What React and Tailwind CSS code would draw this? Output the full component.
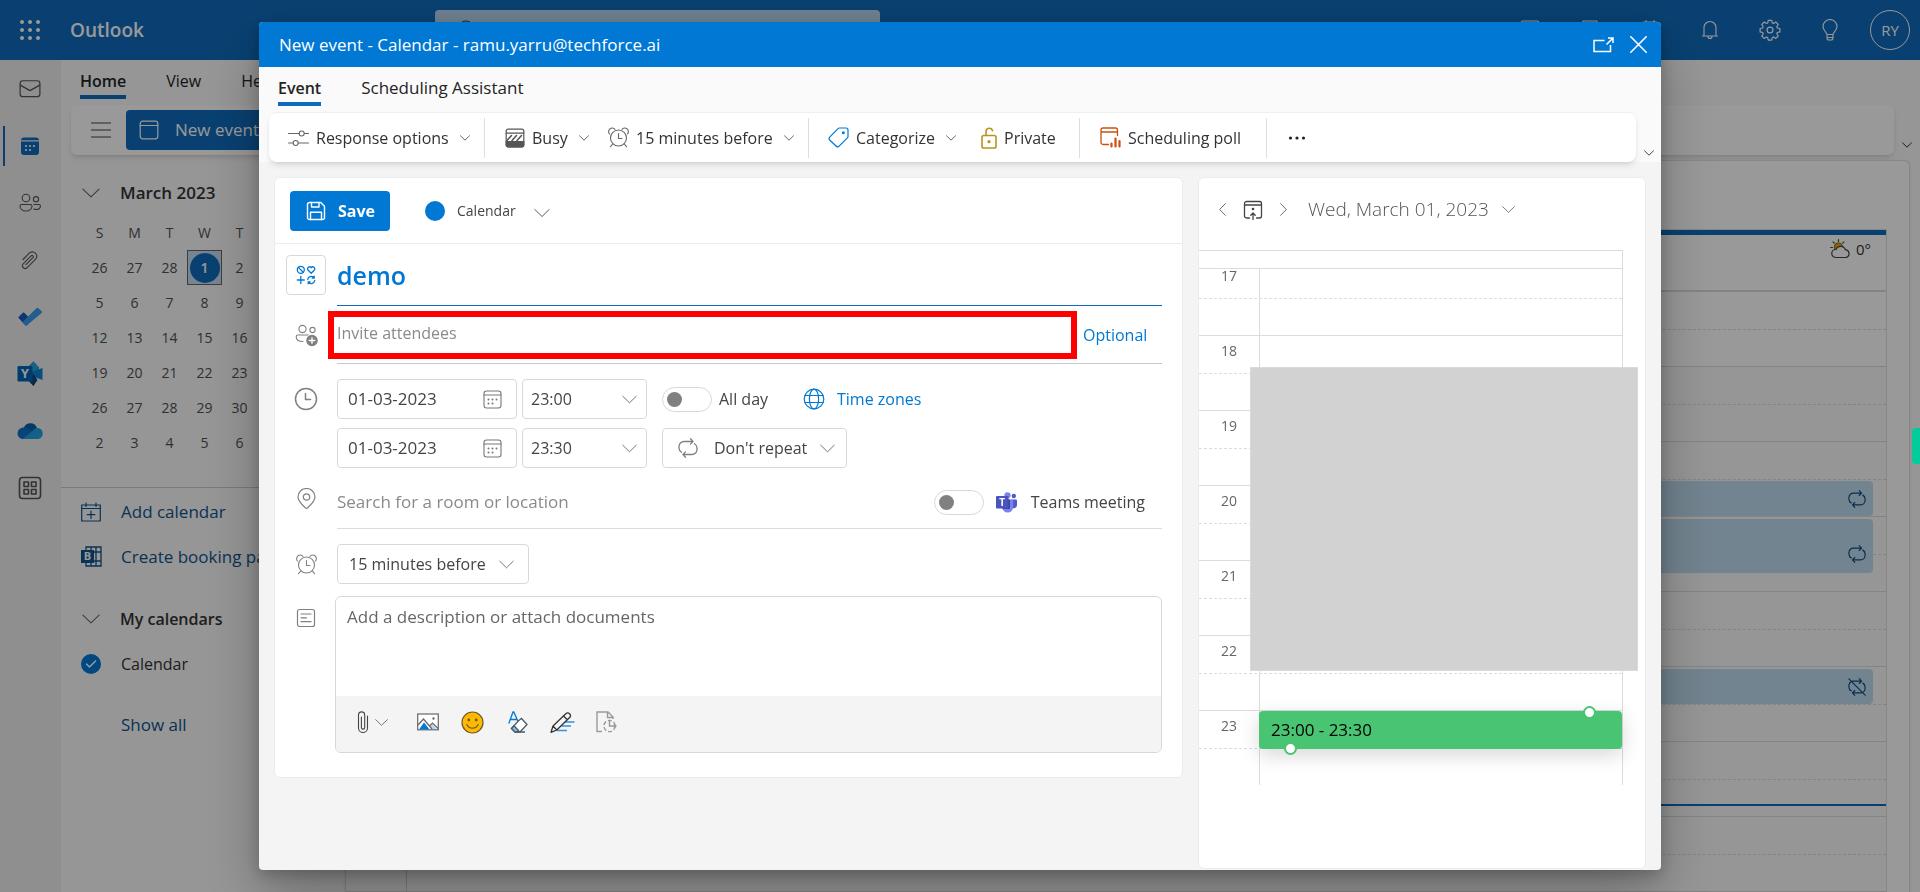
import { useState } from 'react';
import clsx from 'clsx';

/* ---------- icons ---------- */

const Svg = ({ size = 20, w = 1, box = 20, className, children }) => (
    <svg
        width={size}
        height={size}
        viewBox={`0 0 ${box} ${box}`}
        fill="none"
        stroke="currentColor"
        strokeWidth={w}
        strokeLinecap="round"
        strokeLinejoin="round"
        className={clsx('shrink-0', className)}
        aria-hidden="true"
    >
        {children}
    </svg>
);

const Chevron = ({ size = 10, className }) => (
    <Svg size={size} box={10} w={size > 12 ? 0.6 : 1} className={className}>
        <path d="M.5 2.8 5 7.2l4.5-4.4" />
    </Svg>
);

const Waffle = () => (
    <svg width="20" height="20" viewBox="0 0 20 20" fill="currentColor" aria-hidden="true">
        {[2, 10, 18].map((y) => [2, 10, 18].map((x) => <circle key={`${x}-${y}`} cx={x} cy={y} r="2" />))}
    </svg>
);

const MailIcon = () => (
    <Svg size={22} w={1.1}>
        <rect x="1" y="2.5" width="18" height="14.5" rx="2.5" />
        <path d="m1.2 6.5 8.8 5 8.8-5" />
    </Svg>
);

const CalendarSolid = () => (
    <svg width="20" height="20" viewBox="0 0 20 20" aria-hidden="true">
        <path d="M1 4.2A3 3 0 0 1 4 1.5h12a3 3 0 0 1 3 2.7z" fill="#0f6cbd" />
        <path d="M1 5.6h18V16a3 3 0 0 1-3 3H4a3 3 0 0 1-3-3z" fill="#0f6cbd" />
        <g fill="#fff">
            <circle cx="6" cy="10" r="1.1" />
            <circle cx="10" cy="10" r="1.1" />
            <circle cx="14" cy="10" r="1.1" />
            <circle cx="6" cy="14" r="1.1" />
            <circle cx="10" cy="14" r="1.1" />
        </g>
    </svg>
);

const PeopleIcon = () => (
    <Svg size={22} w={1.1} box={22}>
        <circle cx="7" cy="6" r="3.8" />
        <circle cx="17" cy="7.2" r="2.6" />
        <path d="M2.5 12.5h9a1.5 1.5 0 0 1 1.5 1.5c0 3-2.5 5-6 5s-6-2-6-5a1.5 1.5 0 0 1 1.5-1.5z" />
        <path d="M15 12.5h5a1.4 1.4 0 0 1 1.4 1.4c0 2.1-1.7 3.6-4.3 3.6-.9 0-1.7-.2-2.3-.5" />
    </Svg>
);

const PaperclipIcon = () => (
    <Svg size={20} w={1.1}>
        <path d="m3 9.5 6.2-6.3a4.4 4.4 0 0 1 7.2 1.3 4.4 4.4 0 0 1-1 4.9l-8.2 8.2a2.7 2.7 0 0 1-4-3.7l7.900-8a1.2 1.2 0 0 1 1.900 1.700L6 14.600" />
    </Svg>
);

const TodoIcon = () => (
    <svg width="25" height="20" viewBox="0 0 25 20" aria-hidden="true">
        <path d="m.8 9.8 4-4a1 1 0 0 1 1.4 0l7.3 7.3-4.7 5.2a1 1 0 0 1-1.4 0L.8 11.3a1 1 0 0 1 0-1.5z" fill="#185abd" />
        <path d="m7.300 18.200-3-3L18.700 1.100a1 1 0 0 1 1.400 0l3.800 3.300a1 1 0 0 1 0 1.400L9 18.300a1.200 1.200 0 0 1-1.700-.1z" fill="#3a9be8" />
    </svg>
);

const YammerIcon = () => (
    <svg width="26" height="26" viewBox="0 0 26 26" aria-hidden="true">
        <path d="M11 6 16.500.5 22 6.500 16.500 25 11 19z" fill="#0f6aa8" />
        <path d="m11 6 5.500-5.500L22 7l-5.500 5z" fill="#2aa4e0" />
        <path d="M16 10.500 25.500 7v12L16 15.500z" fill="#0a84d6" />
        <path d="m11 19 5.500-6 4 6-4 6z" fill="#11487f" />
        <rect x=".5" y="5" width="15" height="15.500" rx="1.200" fill="#0067b8" />
        <text x="8" y="17.300" textAnchor="middle" fontSize="12.500" fontWeight="700" fill="#fff">Y</text>
    </svg>
);

const OneDriveIcon = () => (
    <svg width="26" height="18" viewBox="0 0 26 18" aria-hidden="true">
        <path d="M7 5.500A7 7 0 0 1 20 6l-5 6-9-4z" fill="#0a5fb0" />
        <path d="M5.500 17A5.500 5.500 0 0 1 .5 11.500C.5 8 3.500 5.300 7 5.500c1.600.1 2.800.5 4 1.300L17 10l-9 7z" fill="#0c74c8" />
        <path d="M15.500 9.300c1.300-2 3-3.200 5-3.200 3 0 5.200 2.400 5.200 5.400 0 3.200-2.300 5.500-5.200 5.500h-15z" fill="#24a0e4" />
    </svg>
);

const AppsIcon = () => (
    <Svg size={24} box={24} w={1.6}>
        <rect x="1.5" y="1.5" width="21" height="21" rx="3" />
        <rect x="6" y="6" width="4.5" height="4.5" />
        <rect x="13.5" y="6" width="4.5" height="4.5" />
        <rect x="6" y="13.5" width="4.5" height="4.5" />
        <rect x="13.5" y="13.5" width="4.5" height="4.5" />
    </Svg>
);

const BlankCalendar = () => (
    <Svg w={1.2}>
        <rect x="1.2" y="1.2" width="17.6" height="17.6" rx="2.5" />
        <path d="M1.2 5.5h17.6" />
    </Svg>
);

const AddCalendarIcon = () => (
    <Svg w={1.2}>
        <rect x=".7" y="3" width="18.6" height="16" />
        <path d="M.7 6.5h18.6M5 1v3.5M15 1v3.5M10 9v7.5M6.2 12.7h7.6" />
    </Svg>
);

const BookingsIcon = () => (
    <svg width="21" height="21" viewBox="0 0 21 21" aria-hidden="true" className="shrink-0">
        <path d="M5 1h15v19H5zM10 1v19M15 1v19M5 6h15M5 15h15" fill="none" stroke="#0f548c" strokeWidth="1.3" />
        <rect x="0" y="4" width="13" height="13" fill="#0f548c" />
        <text x="6.500" y="14.300" textAnchor="middle" fontSize="11" fontWeight="700" fill="#fff">B</text>
    </svg>
);

const VideoIcon = () => (
    <Svg w={1.2}>
        <rect x="1" y="1" width="18" height="17" rx="2" />
        <path d="M5 7h10M5 12h6" />
    </Svg>
);

const NotebookIcon = () => (
    <Svg w={1.2}>
        <path d="M3 1h14v12l-5 6H3zM12 19v-6h5" />
    </Svg>
);

const DayIcon = () => (
    <Svg w={1.2}>
        <rect x="2" y="2" width="16" height="16" rx="2" />
        <path d="M6 .6V4M14 .6V4M2 7h16" />
    </Svg>
);

const BellIcon = () => (
    <Svg size={20} w={1.1}>
        <path d="M4 16V7.5a6 6 0 0 1 12 0V16M2.5 16h15M8 16.5a2 2 0 0 0 4 0" />
    </Svg>
);

const GearIcon = () => (
    <Svg size={22} box={24} w={1.3}>
        <circle cx="12" cy="12" r="3.2" />
        <path d="m10.100 1.500 3.800 0 .6 2.800 1.400.6 2.400-1.600 2.700 2.600-1.600 2.500.6 1.400 2.800.6v3.700l-2.800.6-.6 1.400 1.600 2.400-2.700 2.700-2.400-1.600-1.400.6-.6 2.800h-3.800l-.6-2.800-1.400-.6-2.400 1.600L3 18.500l1.600-2.400-.6-1.400-2.800-.6v-3.700l2.800-.6.600-1.400L3 5.900l2.700-2.600 2.400 1.600 1.400-.6z" />
    </Svg>
);

const BulbIcon = () => (
    <Svg size={22} box={22} w={1.1}>
        <path d="M8 15.5c0-2-4-4-4-8a7 7 0 0 1 14 0c0 4-4 6-4 8zM8 15.5v3.5a2 2 0 0 0 2 2h2a2 2 0 0 0 2-2v-3.5M8 18.5h6" />
    </Svg>
);

const WeatherIcon = () => (
    <svg width="22" height="20" viewBox="0 0 22 20" fill="none" stroke="#444" strokeWidth="1.2" strokeLinecap="round" aria-hidden="true">
        <circle cx="8.5" cy="8" r="4" fill="#f7a800" stroke="#8a6a10" />
        <path d="M8.5.7v1.8M3 2.8l1.3 1.3M14 2.8l-1.3 1.3M.7 8.5h1.8" />
        <path d="M5.5 18.5a4 4 0 1 1 .5-8 5 5 0 0 1 9.4.2 4 4 0 0 1 .8 7.8z" fill="#fff" />
    </svg>
);

const RepeatIcon = ({ size = 20, off, className }) => (
    <Svg size={size} w={1.3} className={className}>
        <path d="M12.500.8 15 3.500l-2.500 2.600M15 3.500H6a5 5 0 0 0-5 5v1.500a5 5 0 0 0 2.500 4.300M7.500 19.200 5 16.500l2.500-2.600M5 16.500h9a5 5 0 0 0 5-5V10a5 5 0 0 0-2.500-4.300" />
        {off && <path d="m1 1 18 18" />}
    </Svg>
);

const SlidersIcon = () => (
    <Svg size={21} box={21} w={1.1}>
        <path d="M.5 6.5h10.5M16.5 6.5h4M.5 16h4.5M10.5 16h10" />
        <circle cx="13.7" cy="6.5" r="2.5" />
        <circle cx="7.7" cy="16" r="2.5" />
    </Svg>
);

const BusyIcon = () => (
    <Svg size={20} w={1.2}>
        <path d="M1.2 13.500h17.600V17a1.800 1.800 0 0 1-1.800 1.800H3A1.800 1.800 0 0 1 1.200 17z" fill="currentColor" />
        <rect x="1.2" y="1.2" width="17.6" height="17.6" rx="2" />
        <path d="M1.2 5.200h17.600" />
        <path d="m2 12.500 4.500-5M7 12.500l4.500-5M12 12.500l4.500-5" strokeWidth="1.6" />
    </Svg>
);

const AlarmIcon = ({ size = 21 }) => (
    <Svg size={size} box={21} w={1.1}>
        <circle cx="10.5" cy="11" r="8" />
        <path d="M10.5 6.5v5h3.5M4.7 17 2.5 19.7M16.3 17l2.2 2.7" />
        <path d="M1.5 7A3.3 3.3 0 1 1 7 2.3M19.5 7A3.3 3.3 0 1 0 14 2.3" />
    </Svg>
);

const TagIcon = () => (
    <Svg size={21} box={21} w={1.2} className="text-[#0078d4]">
        <path d="M11.5 1h6.5a2 2 0 0 1 2 2v6.5a2 2 0 0 1-.6 1.4l-8.3 8.3a2 2 0 0 1-2.8 0L1.7 13a2 2 0 0 1 0-2.8L10 1.7A2 2 0 0 1 11.5 1z" />
        <circle cx="15.3" cy="5.800" r=".9" fill="currentColor" />
    </Svg>
);

const LockOpenIcon = () => (
    <svg width="16" height="22" viewBox="0 0 16 22" fill="none" stroke="#b8941d" strokeWidth="1.6" strokeLinecap="round" aria-hidden="true">
        <rect x="1" y="8.5" width="14" height="12.5" rx="1.8" />
        <path d="M5 8.500V4.500a3.300 3.300 0 0 1 6.500-.8" />
        <circle cx="8" cy="14.7" r=".8" fill="#b8941d" />
    </svg>
);

const PollIcon = () => (
    <svg width="21" height="21" viewBox="0 0 21 21" fill="none" stroke="#ca5010" strokeWidth="1.3" strokeLinecap="round" aria-hidden="true">
        <path d="M8.5 17.5H3a2 2 0 0 1-2-2V3a2 2 0 0 1 2-2h12.5a2 2 0 0 1 2 2v5.5M1 5h16.5" />
        <path d="M11.5 19.5v-3M15.5 19.500v-8M19.500 19.500v-5.500" strokeWidth="2.2" />
    </svg>
);

const PopoutIcon = () => (
    <svg width="21" height="16" viewBox="0 0 21 16" fill="none" stroke="#fff" strokeWidth="1.5" aria-hidden="true">
        <path d="M11.5 3.500H1v11h16.500V8M13.500 7.500l6-6M15 1h5v5" />
    </svg>
);

const SaveIcon = () => (
    <Svg size={20} w={1.4}>
        <path d="M3.5 1.5h11.3l3.7 3.7v11.300a2 2 0 0 1-2 2h-13a2 2 0 0 1-2-2v-13a2 2 0 0 1 2-2z" />
        <path d="M5.5 1.500v4.500h7.500V1.500M4.500 18.500v-7.300h11v7.300" />
    </Svg>
);

const CharmsIcon = () => (
    <Svg size={20} w={1.3} className="text-[#0078d4]">
        <circle cx="4.8" cy="4.8" r="3.5" />
        <path d="m2.400 2.400 4.800 4.800M15.200 8.300 12 5a1.900 1.900 0 0 1 3.200-2.300A1.900 1.900 0 0 1 18.400 5zM4.800 11.500v7M1.300 15h7" />
        <path d="M11.700 14.500a3.500 3.500 0 0 1 6-2M18.200 11.200v2h-2M18.700 15.500a3.500 3.500 0 0 1-6 2M12.200 18.800v-2h2" />
    </Svg>
);

const AttendeesIcon = () => (
    <Svg size={23} box={23} w={1.1}>
        <circle cx="7.5" cy="5" r="3.6" />
        <circle cx="17.5" cy="6" r="2.6" />
        <path d="M13 11H3a1.8 1.8 0 0 0-1.8 1.8C1.2 15.5 3.5 17.5 8 17.5" />
        <circle cx="17" cy="16.5" r="5.2" fill="currentColor" />
        <path d="M17 13.7v5.6M14.2 16.5h5.6" stroke="#fff" strokeWidth="1.3" />
    </Svg>
);

const ClockIcon = () => (
    <Svg size={24} box={24} w={1.5}>
        <circle cx="12" cy="12" r="10.5" />
        <path d="M11.5 6.5v6h5" />
    </Svg>
);

const PinIcon = () => (
    <Svg size={21} box={21} w={1.2}>
        <path d="M10.5 20.3c-.5 0-.9-.2-1.2-.5C5.5 16.3 2 13 2 9a8.5 8.5 0 0 1 17 0c0 4-3.5 7.3-7.3 10.8-.3.3-.7.5-1.2.5z" />
        <circle cx="10.5" cy="9" r="3.2" />
    </Svg>
);

const NoteIcon = () => (
    <Svg size={20} w={1.2}>
        <rect x="1.5" y="1.5" width="17" height="17" rx="2" />
        <path d="M5 6h10M5 9.8h5.5M5 13.7h10" />
    </Svg>
);

const DateIcon = () => (
    <Svg size={19} box={19} w={1.1}>
        <rect x="1" y="1" width="17" height="17" rx="2.5" />
        <path d="M1 5h17" />
        <g fill="currentColor" stroke="none">
            <circle cx="5.5" cy="9.5" r="1" />
            <circle cx="9.5" cy="9.5" r="1" />
            <circle cx="13.5" cy="9.5" r="1" />
            <circle cx="5.5" cy="13.5" r="1" />
            <circle cx="9.5" cy="13.5" r="1" />
        </g>
    </Svg>
);

const GlobeIcon = () => (
    <Svg size={22} box={22} w={1.2}>
        <circle cx="11" cy="11" r="9.8" />
        <ellipse cx="11" cy="11" rx="4.6" ry="9.8" />
        <path d="M2 7.5h18M2 14.5h18" />
    </Svg>
);

const TeamsIcon = () => (
    <svg width="21" height="21" viewBox="0 0 21 21" aria-hidden="true" className="shrink-0">
        <circle cx="17.8" cy="4" r="2.2" fill="#5059c9" />
        <path d="M15 7.5h5a1 1 0 0 1 1 1v4.500a3.500 3.500 0 0 1-5 3z" fill="#5059c9" />
        <circle cx="11.5" cy="3.3" r="3.1" fill="#7b83eb" />
        <path d="M7 7.500h9.200a1 1 0 0 1 1 1V15a5.500 5.500 0 0 1-11 0V8.500z" fill="#7b83eb" />
        <path d="M6.500 7.500H14V16a1 1 0 0 1-1 1H6.500z" fill="#3c42a8" />
        <rect x="0" y="4" width="12.5" height="12.5" rx="1.1" fill="#4b53bc" />
        <text x="6.200" y="14" textAnchor="middle" fontSize="10" fontWeight="700" fill="#fff">T</text>
    </svg>
);

const TodayIcon = () => (
    <Svg size={20} w={1.3}>
        <path d="M6.5 18H3.5a2 2 0 0 1-2-2V3.5a2 2 0 0 1 2-2h13a2 2 0 0 1 2 2V16a2 2 0 0 1-2 2h-3M1.5 5h17" />
        <path d="M10 19.5v-6M7.800 15.300 10 13l2.200 2.300" />
        <circle cx="10" cy="9" r=".7" fill="currentColor" />
    </Svg>
);

const AttachIcon = () => (
    <svg width="12" height="22" viewBox="0 0 12 22" fill="none" stroke="#444" strokeWidth="1.1" strokeLinecap="round" aria-hidden="true">
        <path d="M10.500 5v12a4.500 4.500 0 0 1-9 0V4a3 3 0 0 1 6.200 0v12.500a1.600 1.600 0 0 1-3.300 0V6" />
    </svg>
);

const PictureIcon = () => (
    <svg width="22" height="18" viewBox="0 0 22 18" fill="none" stroke="#666" strokeWidth="1.2" aria-hidden="true">
        <rect x=".7" y="1" width="20.6" height="15.8" fill="#fff" />
        <path d="M2 16.500 7 9.500l5.500 7z" fill="#0078d4" stroke="none" />
        <path d="M13 14l2.500-3 4 5h-5z" fill="#b4d6f0" stroke="none" />
        <path d="m1 12 5.500-6 8.500 10M12.500 13l3-3 5.500 5.500" />
        <circle cx="16.5" cy="5.5" r=".6" />
    </svg>
);

const SmileIcon = () => (
    <svg width="23" height="23" viewBox="0 0 23 23" fill="none" aria-hidden="true">
        <circle cx="11.5" cy="11.5" r="10.5" fill="#ffb900" stroke="#6b5a2a" strokeWidth="1.2" />
        <circle cx="7.8" cy="9" r="1.4" fill="#6b5a2a" />
        <circle cx="15.2" cy="9" r="1.4" fill="#6b5a2a" />
        <path d="M5.800 13.500c1.200 2.500 3.300 3.700 5.700 3.700s4.500-1.200 5.700-3.700" stroke="#6b5a2a" strokeWidth="1.2" strokeLinecap="round" />
    </svg>
);

const ClearFormatIcon = () => (
    <svg width="20" height="22" viewBox="0 0 20 22" fill="none" strokeWidth="1.3" aria-hidden="true">
        <path d="M.8 12.500 5 1h.8l4 9M2.500 8.500h6" stroke="#0078d4" />
        <path d="m10.500 9.800 3-2.300 5.500 6-7 7.500H7L3.500 17.500z" fill="#fff" stroke="#4a5a68" />
        <path d="m3.500 17.500 2.500-2.700 4.500 4.700L9 21H7z" fill="#7fbdec" stroke="#4a5a68" />
        <path d="M9 21h8" stroke="#4a5a68" />
    </svg>
);

const InkIcon = () => (
    <svg width="25" height="21" viewBox="0 0 25 21" fill="none" strokeWidth="1.3" strokeLinejoin="round" aria-hidden="true">
        <path d="M15 10h9.500M11.500 14h9.500M7 18.500h10" stroke="#2f93dd" />
        <path d="M1 20.300 3 14 15.800 1.800a2.600 2.600 0 0 1 3.800 3.700L6.800 18zM3 14l3.800 4M13.500 4l3.800 3.700" fill="#f4f4f4" stroke="#333" />
    </svg>
);

const TemplateIcon = () => (
    <svg width="21" height="22" viewBox="0 0 21 22" fill="none" stroke="#999" strokeWidth="1.4" aria-hidden="true">
        <path d="M6 20.500H1V1h11l5 5v2M11.500 1v5.500H17" />
        <circle cx="13.5" cy="15" r="5.6" strokeDasharray="4 2" />
        <path d="M13.500 9v6h6M18 13.300l2 1.700-2 1.700" />
    </svg>
);

/* ---------- page behind the dialog ---------- */

const railItems = [
    { label: 'Mail', Icon: MailIcon },
    { label: 'Calendar', Icon: CalendarSolid, active: true },
    { label: 'People', Icon: PeopleIcon },
    { label: 'Files', Icon: PaperclipIcon },
    { label: 'To Do', Icon: TodoIcon },
    { label: 'Yammer', Icon: YammerIcon },
    { label: 'OneDrive', Icon: OneDriveIcon },
    { label: 'More apps', Icon: AppsIcon },
];

const headerItems = [
    { label: 'Meet now', Icon: VideoIcon },
    { label: 'Notes', Icon: NotebookIcon },
    { label: 'My day', Icon: DayIcon },
    { label: 'Notifications', Icon: BellIcon },
    { label: 'Settings', Icon: GearIcon },
    { label: 'Tips', Icon: BulbIcon },
];

const weeks = [
    [26, 27, 28, 1, 2, 3, 4],
    [5, 6, 7, 8, 9, 10, 11],
    [12, 13, 14, 15, 16, 17, 18],
    [19, 20, 21, 22, 23, 24, 25],
    [26, 27, 28, 29, 30, 31, 1],
    [2, 3, 4, 5, 6, 7, 8],
];

const TopBar = () => (
    <header className="flex h-15 shrink-0 items-center bg-[#0f6cbd] pr-2.5 text-white">
        <button type="button" aria-label="App launcher" className="flex w-15 justify-center">
            <Waffle />
        </button>
        <span className="w-[375px] pl-2.5 text-[19px] font-semibold">Outlook</span>
        <div className="flex h-10 w-[445px] items-center rounded bg-[#b7d5ef] pl-5 text-[#33475b]">
            <Svg w={1.2}>
                <circle cx="11" cy="8" r="7" />
                <path d="m6 13-5 6" />
            </Svg>
        </div>
        <div className="ml-auto flex items-center">
            {headerItems.map(({ label, Icon }) => (
                <button key={label} type="button" aria-label={label} className="flex w-15 justify-center">
                    <Icon />
                </button>
            ))}
            <button type="button" className="ml-2.5 size-10 rounded-full border border-white text-[15px]">RY</button>
        </div>
    </header>
);

const Rail = () => (
    <nav className="w-[61px] shrink-0 bg-[#efefef] pr-px text-[#555]">
        {railItems.map(({ label, Icon, active }) => (
            <button
                key={label}
                type="button"
                aria-label={label}
                className="relative flex h-[57px] w-full items-center justify-center"
            >
                {active && <span className="absolute left-[3px] h-10 w-0.5 bg-[#0f6cbd]" />}
                <Icon />
            </button>
        ))}
    </nav>
);

const MonthPicker = () => (
    <div className="ml-[21px] grid w-[245px] grid-cols-7 text-[14px] text-[#505050]">
        {['S', 'M', 'T', 'W', 'T', 'F', 'S'].map((d, i) => (
            <span key={i} className="flex h-9 items-center justify-center">{d}</span>
        ))}
        {weeks.map((week, row) =>
            week.map((day, col) => {
                const today = row === 0 && day === 1;
                return (
                    <button
                        key={`${row}-${col}`}
                        type="button"
                        className={clsx(
                            'flex h-[35px] items-center justify-center',
                            today && 'border border-[#666] bg-[#c7dcf2]'
                        )}
                    >
                        {today ? (
                            <span className="flex size-[30px] items-center justify-center rounded-full bg-[#0f6cbd] font-semibold text-white">{day}</span>
                        ) : (
                            day
                        )}
                    </button>
                );
            })
        )}
    </div>
);

const Sidebar = () => (
    <aside className="w-[284px] shrink-0 text-[16px] text-[#333]">
        <div className="mt-[15px] flex h-9 items-center gap-5 pl-[21px] text-[17px] font-semibold">
            <Chevron size={18} className="text-[#666]" />
            March 2023
        </div>
        <div className="mt-[3px]">
            <MonthPicker />
        </div>
        <div className="mt-[27px] border-t border-[#ccc] text-[17px] text-[#0f548c]">
            <a href="#add" className="flex h-[47px] items-center gap-5 pl-5">
                <AddCalendarIcon />
                Add calendar
            </a>
            <a href="#booking" className="flex h-[43px] items-center gap-[19px] pl-5">
                <BookingsIcon />
                <span className="whitespace-nowrap">Create booking page</span>
            </a>
        </div>
        <div className="mt-[18px] flex h-[45px] items-center gap-5 pl-[21px] font-semibold">
            <Chevron size={18} className="text-[#666]" />
            My calendars
        </div>
        <label className="flex h-[45px] items-center gap-5 pl-5">
            <input type="checkbox" defaultChecked className="peer sr-only" />
            <Svg w={1.5}>
                <circle cx="10" cy="10" r="10" fill="#0078d4" stroke="none" />
                <path d="m5.500 10 3 3 6-6" stroke="#fff" />
            </Svg>
            Calendar
        </label>
        <a href="#all" className="mt-4 flex h-[45px] items-center pl-[60px] text-[17px] text-[#0f548c]">Show all</a>
    </aside>
);

const BackEvent = ({ className, off }) => (
    <div className={clsx('absolute left-[61px] right-[13px] flex items-center justify-end rounded-sm bg-[#bfdcf0] pr-[7px] text-[#0f4a80]', className)}>
        <RepeatIcon size={18} off={off} />
    </div>
);

const DayView = () => (
    <main className="mr-2.5 flex min-w-0 flex-1 flex-col rounded-t-md border border-b-0 border-[#e0e0e0] bg-white shadow-sm">
        <div className="h-17 shrink-0" />
        <div className="mr-[22px] flex-1 border-r border-t border-[#e0e0e0]">
            <div className="h-[60px] border-t-[5px] border-[#0f6cbd]">
                <div className="flex h-7 items-center justify-end gap-1 pr-[15px] text-[15px] text-[#333]">
                    <WeatherIcon />
                    0°
                </div>
            </div>
            <div className="relative border-t-2 border-[#dcdcdc]">
                {Array.from({ length: 8 }, (_, i) => (
                    <div key={i} className={clsx('h-[75px] border-b border-[#dcdcdc]', i > 0 && 'bg-[#fafafa]')}>
                        <div className="h-[38px] border-b border-dashed border-[#dcdcdc]" />
                    </div>
                ))}
                <span className="absolute inset-y-0 left-15 border-l border-[#d0d0d0]" />
                <BackEvent className="top-[189px] h-[35px]" />
                <BackEvent className="top-[227px] h-[54px] pt-4" />
                <BackEvent className="top-[377px] h-[35px]" off />
                <span className="absolute left-15 right-0 top-[512px] h-0.5 bg-[#0f6cbd]" />
            </div>
        </div>
    </main>
);

const Backdrop = () => (
    <div className="flex h-screen flex-col overflow-hidden bg-[#fafafa]">
        <TopBar />
        <div className="flex min-h-0 flex-1">
            <Rail />
            <div className="flex min-w-0 flex-1 flex-col">
                <div className="flex h-[39px] shrink-0 items-end gap-10 pl-[19px] text-[16px] text-[#242424]">
                    <button type="button" className="border-b-4 border-[#0f6cbd] pb-0.5 font-semibold">Home</button>
                    <button type="button" className="pb-1.5">View</button>
                    <button type="button" className="pb-1.5">Help</button>
                </div>
                <div className="mb-[5px] mt-1.5 flex items-end pl-2.5 pr-2">
                    <div className="flex h-[50px] flex-1 items-center rounded-md bg-white shadow-md">
                        <button type="button" aria-label="Navigation" className="flex w-[55px] justify-center pl-1 text-[#444]">
                            <Svg w={1.1}>
                                <path d="M0 3h20M0 10h20M0 17h20" />
                            </Svg>
                        </button>
                        <button type="button" className="flex h-10 w-[160px] items-center gap-4 rounded bg-[#0f6cbd] pl-[13px] text-[17px] text-white">
                            <BlankCalendar />
                            New event
                        </button>
                    </div>
                    <button type="button" aria-label="Ribbon options" className="ml-2 pb-[5px] text-[#333]"><Chevron /></button>
                </div>
                <div className="flex min-h-0 flex-1">
                    <Sidebar />
                    <DayView />
                </div>
            </div>
        </div>
    </div>
);

/* ---------- new event dialog ---------- */

const RibbonButton = ({ icon, children, menu, className }) => (
    <button type="button" className={clsx('flex items-center gap-[7px] whitespace-nowrap', className)}>
        {icon}
        {children}
        {menu && <Chevron className="ml-1 text-[#666]" />}
    </button>
);

const Divider = () => <span className="h-10 w-px bg-[#dedede]" />;

const Ribbon = () => (
    <div className="flex items-end pl-2.5 pr-[7px]">
        <div className="flex h-[50px] flex-1 items-center rounded-lg border-t border-[#f0f0f0] bg-white pl-[19px] text-[16px] text-[#333] shadow-md">
            <RibbonButton menu icon={<span className="text-[#666]"><SlidersIcon /></span>} className="w-[196px]">Response options</RibbonButton>
            <Divider />
            <RibbonButton menu icon={<span className="text-[#555]"><BusyIcon /></span>} className="ml-5 w-[103px]">Busy</RibbonButton>
            <RibbonButton menu icon={<span className="text-[#666]"><AlarmIcon /></span>} className="w-[200px]">15 minutes before</RibbonButton>
            <Divider />
            <RibbonButton menu icon={<TagIcon />} className="ml-[19px] w-[153px]">Categorize</RibbonButton>
            <RibbonButton icon={<LockOpenIcon />} className="w-[98px]">Private</RibbonButton>
            <Divider />
            <RibbonButton icon={<PollIcon />} className="ml-5 w-[166px]">Scheduling poll</RibbonButton>
            <Divider />
            <button type="button" aria-label="More options" className="ml-[21px] text-[#222]">
                <Svg size={18} box={18}>
                    <g fill="currentColor" stroke="none">
                        <circle cx="2.5" cy="9" r="1.6" />
                        <circle cx="9" cy="9" r="1.6" />
                        <circle cx="15.5" cy="9" r="1.6" />
                    </g>
                </Svg>
            </button>
        </div>
        <button type="button" aria-label="Ribbon options" className="ml-2 pb-1 text-[#444]"><Chevron /></button>
    </div>
);

const Row = ({ icon, className, children }) => (
    <div className={clsx('flex items-center pr-5', className)}>
        <span className="flex w-[62px] shrink-0 justify-center text-[#808080]">{icon}</span>
        {children}
    </div>
);

const Toggle = ({ id }) => (
    <input
        id={id}
        type="checkbox"
        role="switch"
        className="flex h-[25px] w-[50px] shrink-0 appearance-none items-center rounded-full border border-[#d8d8d8] bg-white px-1 before:size-[15px] before:rounded-full before:bg-[#808080] checked:justify-end"
    />
);

const Select = ({ label, options, className, icon, chevron = 'right-2.5' }) => (
    <div className="relative flex items-center">
        {icon && <span className="pointer-events-none absolute left-4 text-[#808080]">{icon}</span>}
        <select aria-label={label} className={clsx('h-10 appearance-none rounded border border-[#d8d8d8] bg-white outline-none', className)}>
            {options.map((o) => (
                <option key={o}>{o}</option>
            ))}
        </select>
        <Chevron size={15} className={clsx('pointer-events-none absolute text-[#666]', chevron)} />
    </div>
);

const DateField = ({ label, value, onChange }) => (
    <div className="mr-[5px] flex h-10 w-[180px] items-center rounded border border-[#d8d8d8] bg-white pr-3.5">
        <input
            aria-label={label}
            value={value}
            onChange={(e) => onChange(e.target.value)}
            className="w-full min-w-0 pl-2.5 text-[17px] outline-none"
        />
        <span className="text-[#777]"><DateIcon /></span>
    </div>
);

const EventForm = () => {
    const [form, setForm] = useState({ title: 'demo', start: '01-03-2023', end: '01-03-2023' });
    const update = (key) => (value) => setForm({ ...form, [key]: value });

    return (
        <form
            onSubmit={(e) => e.preventDefault()}
            className="min-w-0 flex-1 self-start rounded-md border border-[#ececec] bg-white pb-6 text-[16px] text-[#444]"
        >
            <div className="flex h-[66px] items-center border-b border-[#ececec] pl-[15px]">
                <button type="submit" className="flex h-10 w-[100px] items-center gap-3 rounded bg-[#0078d4] pl-4 font-bold text-white">
                    <SaveIcon />
                    Save
                </button>
                <button type="button" className="ml-[35px] flex items-center text-[14px]">
                    <span className="mr-3 size-5 rounded-full bg-[#0078d4]" />
                    Calendar
                    <Chevron size={16} className="ml-[18px] mt-1 text-[#555]" />
                </button>
            </div>

            <Row
                className="h-[62px]"
                icon={
                    <button type="button" aria-label="Add charm" className="flex size-10 items-center justify-center rounded border border-[#d8d8d8]">
                        <CharmsIcon />
                    </button>
                }
            >
                <input
                    aria-label="Title"
                    value={form.title}
                    onChange={(e) => update('title')(e.target.value)}
                    className="h-full min-w-0 flex-1 border-b border-[#0f6cbd] text-[25px] font-semibold text-[#0078d4] outline-none"
                />
            </Row>

            <Row className="h-[58px]" icon={<AttendeesIcon />}>
                <div className="flex h-full min-w-0 flex-1 items-center justify-between border-b border-[#c8c8c8]">
                    <input
                        aria-label="Invite attendees"
                        placeholder="Invite attendees"
                        className="-ml-[9px] h-12 min-w-0 flex-1 border-[6px] border-[#ff0000] pb-1 pl-[3px] outline-none placeholder:text-[#8a8a8a]"
                    />
                    <button type="button" className="w-[85px] pl-1.5 text-left text-[#0078d4]">Optional</button>
                </div>
            </Row>

            <Row className="mt-[15px]" icon={<ClockIcon />}>
                <DateField label="Start date" value={form.start} onChange={update('start')} />
                <Select label="Start time" options={['23:00', '23:30']} className="w-[125px] pl-2" />
                <div className="ml-[15px] flex items-center">
                    <Toggle id="all-day" />
                    <label htmlFor="all-day" className="w-[84px] pl-[7px]">All day</label>
                </div>
                <a href="#zones" className="flex items-center gap-3 pl-[7px] text-[#0078d4]">
                    <GlobeIcon />
                    Time zones
                </a>
            </Row>
            <Row className="mt-[9px]">
                <DateField label="End date" value={form.end} onChange={update('end')} />
                <Select label="End time" options={['23:30', '00:00']} className="w-[125px] pl-2" />
                <div className="ml-[15px]">
                    <Select
                        label="Repeat"
                        options={["Don't repeat", 'Daily', 'Weekly']}
                        icon={<RepeatIcon />}
                        chevron="right-3"
                        className="w-[185px] pl-[51px]"
                    />
                </div>
            </Row>

            <Row className="h-[61px]" icon={<PinIcon />}>
                <div className="flex h-full min-w-0 flex-1 items-center border-b border-[#dcdcdc] pt-2">
                    <input
                        aria-label="Location"
                        placeholder="Search for a room or location"
                        className="min-w-0 flex-1 text-[17px] outline-none placeholder:text-[#8a8a8a]"
                    />
                    <Toggle id="teams" />
                    <label htmlFor="teams" className="ml-3 flex items-center gap-3.5 pr-[17px]">
                        <TeamsIcon />
                        Teams meeting
                    </label>
                </div>
            </Row>

            <Row className="mt-[15px]" icon={<AlarmIcon />}>
                <Select
                    label="Reminder"
                    options={['15 minutes before', '30 minutes before']}
                    chevron="right-[15px]"
                    className="w-[192px] pl-[11px]"
                />
            </Row>

            <Row className="mt-3 items-start" icon={<span className="pt-3"><NoteIcon /></span>}>
                <div className="-ml-0.5 flex-1 overflow-hidden rounded-md border border-[#d8d8d8]">
                    <textarea
                        aria-label="Description"
                        placeholder="Add a description or attach documents"
                        className="block h-[99px] w-full resize-none px-[11px] pt-[7px] text-[17px] outline-none placeholder:text-[#666]"
                    />
                    <div className="flex h-14 items-center bg-[#f4f4f4] pb-1 pl-[21px] text-[#555]">
                        <button type="button" aria-label="Attach" className="flex w-[60px] items-center gap-1.5"><AttachIcon /><Chevron size={13} /></button>
                        <button type="button" aria-label="Insert picture" className="w-[44px]"><PictureIcon /></button>
                        <button type="button" aria-label="Insert emoji" className="w-[47px]"><SmileIcon /></button>
                        <button type="button" aria-label="Formatting" className="w-[42px]"><ClearFormatIcon /></button>
                        <button type="button" aria-label="Ink" className="w-[46px]"><InkIcon /></button>
                        <button type="button" aria-label="Templates"><TemplateIcon /></button>
                    </div>
                </div>
            </Row>
        </form>
    );
};

const hours = [18, 19, 20, 21, 22, 23];

const HourRow = ({ hour }) => (
    <div className="h-[75px] border-t border-[#dcdcdc]">
        <div className="h-[38px] w-full border-b border-dashed border-[#dcdcdc] pl-[22px] pt-1">{hour}</div>
    </div>
);

const SchedulePreview = () => (
    <section className="w-[448px] shrink-0 rounded-md border border-[#ececec] bg-white">
        <div className="flex h-[72px] items-center pb-[9px] pl-[17px] text-[#444]">
            <button type="button" aria-label="Previous day"><Chevron size={13} className="rotate-90" /></button>
            <button type="button" aria-label="Today" className="ml-3.5"><TodayIcon /></button>
            <button type="button" aria-label="Next day" className="ml-3.5"><Chevron size={13} className="-rotate-90" /></button>
            <button type="button" className="ml-[18px] flex items-center gap-[13px] whitespace-nowrap text-[19px] font-light text-[#555]">
                Wed, March 01, 2023
                <Chevron size={13} />
            </button>
        </div>
        <div className="mr-[22px] h-[18px] border-r border-t border-[#dcdcdc]" />
        <div className="relative mr-[22px] border-r border-[#dcdcdc] text-[14px] text-[#666]">
            <div className="h-[67px] border-t border-[#dcdcdc]">
                <div className="h-[30px] border-b border-dashed border-[#dcdcdc] pl-[22px] leading-[14px]">17</div>
            </div>
            {hours.map((hour) => (
                <HourRow key={hour} hour={hour} />
            ))}
            <span className="absolute inset-y-0 left-15 border-l border-[#dcdcdc]" />

            <div className="absolute -right-4 left-[51px] top-[99px] h-[304px] border border-[#dadada] bg-[#d2d2d2]" />

            <div className="absolute left-[60px] right-0 top-[443px] flex h-[38px] items-center rounded-sm bg-[#49c472] pl-3 text-[17px] text-black shadow-[0_6px_20px_rgba(0,0,0,0.16)]">
                23:00 - 23:30
                <span className="absolute -top-[5px] right-[26px] size-[13px] rounded-full border-2 border-[#49c472] bg-white" />
                <span className="absolute -bottom-1.5 left-[25px] size-[13px] rounded-full border-2 border-[#49c472] bg-white" />
            </div>
        </div>
    </section>
);

const NewEventDialog = () => (
    <div
        role="dialog"
        aria-label="New event"
        className="flex min-w-0 flex-1 flex-col overflow-hidden rounded bg-[#f4f4f4] shadow-[0_26px_58px_rgba(0,0,0,0.28),0_5px_15px_rgba(0,0,0,0.22)]"
    >
        <div className="flex h-[45px] shrink-0 items-center bg-[#0078d4] pl-5 pr-3.5 text-[17px] text-white">
            <span className="flex-1">New event - Calendar - ramu.yarru@techforce.ai</span>
            <button type="button" aria-label="Open in new window"><PopoutIcon /></button>
            <button type="button" aria-label="Close" className="ml-4">
                <Svg size={17} box={17} w={1.6}>
                    <path d="m.8.8 15.400 15.400M16.200.8.8 16.200" />
                </Svg>
            </button>
        </div>
        <div className="shrink-0 bg-[#fafafa]">
            <div className="mb-1.5 flex h-[39px] items-end gap-10 pl-[19px] text-[#242424]">
                <button type="button" className="border-b-4 border-[#0f6cbd] pb-0.5 text-[16px] font-semibold">Event</button>
                <button type="button" className="pb-1.5 text-[17px]">Scheduling Assistant</button>
            </div>
            <Ribbon />
        </div>
        <div className="flex flex-1 gap-[15px] px-[15px] pb-px pt-[15px]">
            <EventForm />
            <SchedulePreview />
        </div>
    </div>
);

export default function App() {
    return (
        <div className="font-['Open_Sans','Noto_Sans',sans-serif]">
            <Backdrop />
            <div className="fixed inset-0 flex bg-black/40 px-[259px] py-[22px]">
                <NewEventDialog />
            </div>
            <span className="fixed right-0 top-[48%] h-9 w-2 rounded-l bg-[#02cc9a]" />
        </div>
    );
}
